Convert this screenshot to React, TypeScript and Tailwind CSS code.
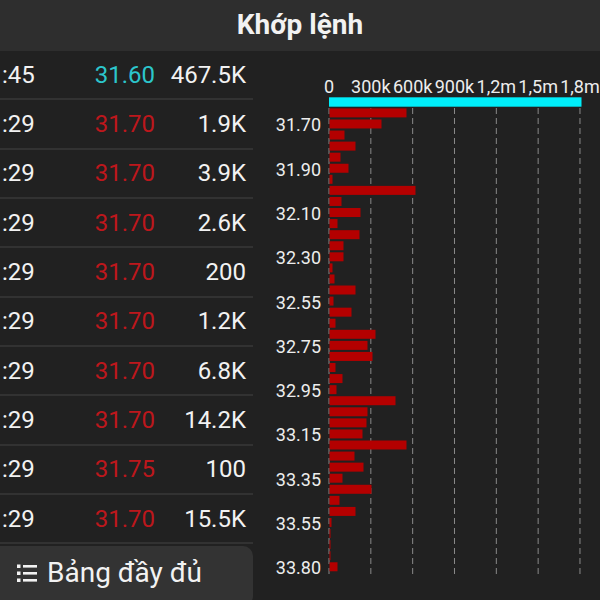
import React from "react";

const trades = [
  { time: ":45", price: "31.60", up: true, vol: "467.5K" },
  { time: ":29", price: "31.70", up: false, vol: "1.9K" },
  { time: ":29", price: "31.70", up: false, vol: "3.9K" },
  { time: ":29", price: "31.70", up: false, vol: "2.6K" },
  { time: ":29", price: "31.70", up: false, vol: "200" },
  { time: ":29", price: "31.70", up: false, vol: "1.2K" },
  { time: ":29", price: "31.70", up: false, vol: "6.8K" },
  { time: ":29", price: "31.70", up: false, vol: "14.2K" },
  { time: ":29", price: "31.75", up: false, vol: "100" },
  { time: ":29", price: "31.70", up: false, vol: "15.5K" },
];

// bar lengths in px, one per price step below the cyan bar
const bars = [
  77, 52, 15, 26, 11, 19, 3, 86, 12, 31, 8, 30, 14, 14, 3, 5, 26, 4, 22, 6, 46,
  38, 43, 6, 13, 7, 66, 38, 37, 33, 77, 25, 34, 13, 42, 10, 26, 2, 1, 1, 1, 8,
];

const priceLabels = [
  "31.70", "31.90", "32.10", "32.30", "32.55", "32.75",
  "32.95", "33.15", "33.35", "33.55", "33.80",
];

const ticks = ["0", "300k", "600k", "900k", "1,2m", "1,5m", "1,8m"];

const X0 = 329;
const STEP_X = 41.83;
const TOP0 = 108.4;
const STEP_Y = 11.07;

const VolumeChart = () => (
  <svg viewBox="253 51 347 549" width={347} height={549} className="block">
    {/* axis labels */}
    {ticks.map((t, i) => (
      <text
        key={t}
        x={X0 + i * STEP_X}
        y={93}
        fontSize={18}
        fill="#ededed"
        textAnchor="middle"
      >
        {t}
      </text>
    ))}

    {/* grid */}
    {ticks.map((t, i) => (
      <line
        key={"g" + t}
        x1={X0 + i * STEP_X}
        x2={X0 + i * STEP_X}
        y1={108}
        y2={576}
        stroke="#8a8a8a"
        strokeWidth={1}
        strokeDasharray="6 4"
      />
    ))}

    {/* matched price bar */}
    <rect x={X0} y={97.3} width={252.5} height={9.4} fill="#00eefa" />

    {bars.map((w, i) => (
      <rect
        key={i}
        x={X0 + 0.5}
        y={TOP0 + i * STEP_Y}
        width={w}
        height={9}
        fill="#b40000"
      />
    ))}

    {priceLabels.map((p, k) => (
      <text
        key={p}
        x={321}
        y={TOP0 + (1 + k * 4) * STEP_Y + 12}
        fontSize={18}
        fill="#ededed"
        textAnchor="end"
      >
        {p}
      </text>
    ))}
  </svg>
);

const ListIcon = () => (
  <svg width="20" height="19" viewBox="0 0 20 19" fill="#f2f2f2">
    <rect x="0" y="0.5" width="3.5" height="3.5" />
    <rect x="0" y="7.5" width="3.5" height="3.5" />
    <rect x="0" y="14.5" width="3.5" height="3.5" />
    <rect x="6" y="1" width="14" height="2.6" />
    <rect x="6" y="8" width="14" height="2.6" />
    <rect x="6" y="15" width="14" height="2.6" />
  </svg>
);

export default function App() {
  return (
    <div className="w-[600px] h-[600px] overflow-hidden bg-[#212121] text-[#f2f2f2] font-['Roboto',sans-serif] flex flex-col">
      {/* Header */}
      <div className="h-[51px] shrink-0 bg-[#2e2e2e] flex items-center justify-center">
        <h1 className="text-[28px] font-bold leading-none -mt-[2px]">Khớp lệnh</h1>
      </div>

      <div className="flex flex-1 min-h-0">
        {/* Trades list */}
        <div className="w-[253px] shrink-0 flex flex-col">
          {trades.map((t, i) => (
            <div
              key={i}
              className="h-[49.33px] shrink-0 flex items-center border-b-2 border-[#323232] text-[24px] leading-none"
            >
              <span className="w-[80px] pl-[2px]">{t.time}</span>
              <span
                className={
                  "w-[75px] text-right " +
                  (t.up ? "text-[#2cc6cc]" : "text-[#bd171c]")
                }
              >
                {t.price}
              </span>
              <span className="w-[91px] text-right">{t.vol}</span>
            </div>
          ))}

          <button className="mt-[2px] h-[60px] shrink-0 bg-[#333333] rounded-r-[10px] flex items-center gap-[10px] pl-[17px] pb-[6px] text-[28px] text-[#f2f2f2]">
            <ListIcon />
            <span>Bảng đầy đủ</span>
          </button>
        </div>

        {/* Chart */}
        <div className="flex-1">
          <VolumeChart />
        </div>
      </div>
    </div>
  );
}
